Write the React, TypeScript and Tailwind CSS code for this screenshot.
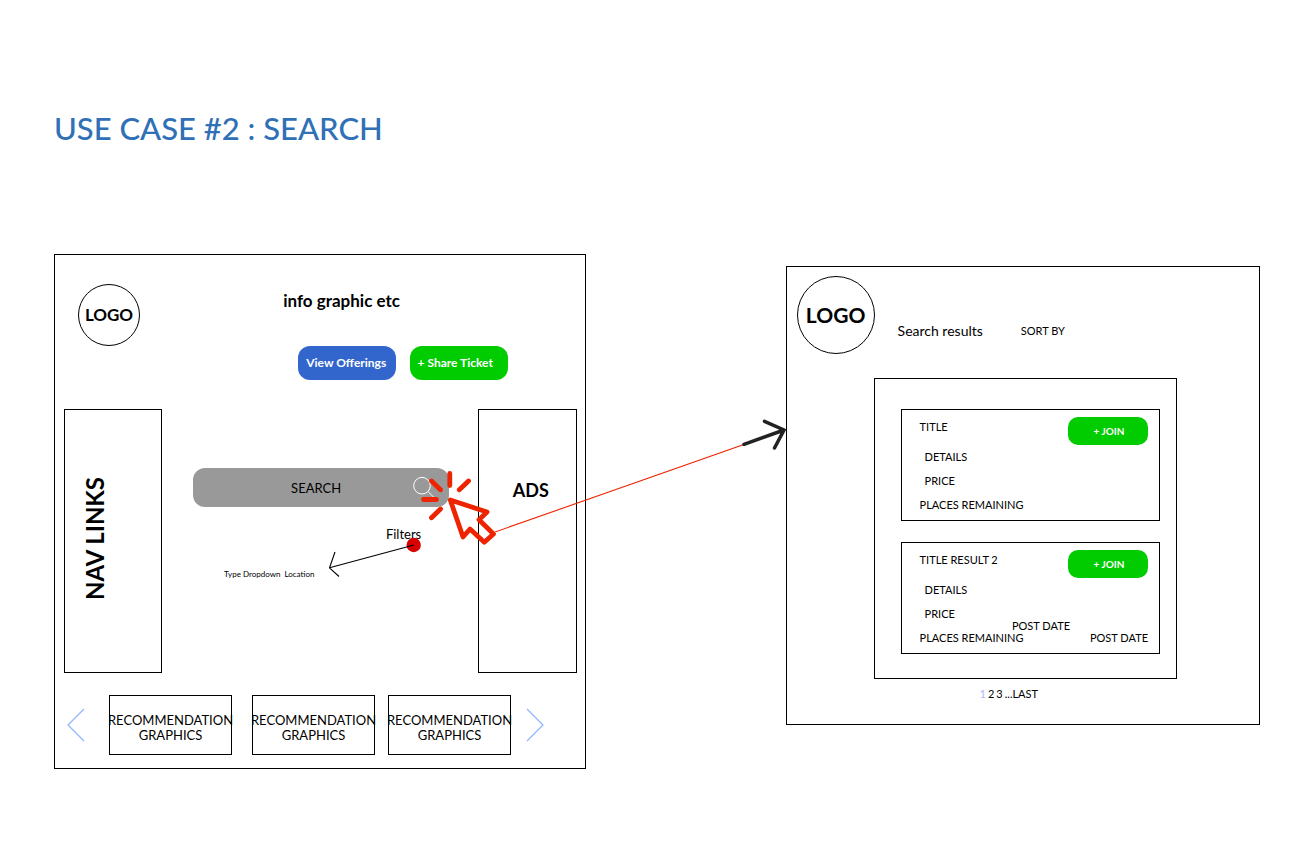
import type { ReactNode } from "react";

function Logo({ className }: { className: string }) {
  return (
    <div className={`flex shrink-0 items-center justify-center rounded-full border border-black font-bold ${className}`}>
      LOGO
    </div>
  );
}

function Chevron({ label, points }: { label: string; points: string }) {
  return (
    <button type="button" aria-label={label} className="shrink-0">
      <svg width="18" height="34" viewBox="0 0 18 34" fill="none" stroke="#8fb4ff" strokeWidth="1.2">
        <polyline points={points} />
      </svg>
    </button>
  );
}

function ClickCursor() {
  return (
    <svg
      className="pointer-events-none absolute -right-[49px] top-0 z-10"
      width="78"
      height="80"
      viewBox="420 467 78 80"
      fill="none"
      stroke="#ee2400"
      strokeWidth="4.8"
      strokeLinecap="round"
      strokeLinejoin="round"
      aria-hidden="true"
    >
      <path d="M449.800 472.500V484.500M431.500 480L440.500 488.800M468.500 480L459.300 488.800M423.500 498.500H436.500M440.500 508L431.500 516.800" />
      <path d="M450.300 499L487 511L479 518.700L493.500 533L484.300 541.300L470 528L463 536Z" />
    </svg>
  );
}

function FilterArrow() {
  return (
    <svg
      className="pointer-events-none absolute right-[56px] top-[128px]"
      width="94"
      height="42"
      viewBox="328 537 94 42"
      fill="none"
      stroke="#000"
      strokeWidth="1.1"
      aria-hidden="true"
    >
      <circle cx="413.700" cy="545" r="7.200" fill="#d90000" stroke="none" />
      <path d="M414 545L329.500 567.800M335 552L329.500 567.800L339 576.500" />
    </svg>
  );
}

const recommendations = [
  { id: "first", spacing: "ml-6 mr-5" },
  { id: "second", spacing: "mr-[13px]" },
  { id: "third", spacing: "" },
];

function HomeBoard() {
  return (
    <section className="flex min-w-0 flex-[532] flex-col border border-black pb-[13px]">
      <header className="flex pl-[23px] pr-[77px] pt-[29px]">
        <Logo className="size-[62px] text-[17px]" />
        <div className="ml-auto flex w-[225px] flex-col pt-[5px]">
          <h2 className="text-[17px] font-bold leading-6">info graphic etc</h2>
          <div className="mt-[33px] flex justify-end gap-[14px]">
            <button type="button" className="h-[34px] w-[98px] whitespace-nowrap rounded-xl bg-[#3366cc] pr-[2px] text-[12px] font-bold text-white">
              View Offerings
            </button>
            <button type="button" className="h-[34px] w-[98px] whitespace-nowrap rounded-xl bg-[#00cc00] pr-2 text-[12px] font-bold text-white">
              + Share Ticket
            </button>
          </div>
        </div>
      </header>

      <div className="mt-[29px] flex min-h-[264px] pl-[9px] pr-2">
        <nav className="flex w-[98px] shrink-0 items-center justify-center border border-black pb-1 pr-9">
          <span className="rotate-180 text-[24px] font-bold leading-8 [writing-mode:vertical-rl]">NAV LINKS</span>
        </nav>
        <div className="relative min-w-0 flex-1 pt-[59px]">
          <div className="relative ml-[31px] mr-[29px]">
            <input
              type="text"
              aria-label="Search"
              placeholder="SEARCH"
              className="h-[39px] w-full rounded-xl bg-[#999999] pr-[10px] text-center text-[13px] text-black placeholder:text-black"
            />
            <svg
              className="absolute right-[14px] top-[8px]"
              width="22"
              height="24"
              viewBox="412 476 22 24"
              fill="none"
              stroke="#fff"
              strokeWidth="1"
              aria-hidden="true"
            >
              <circle cx="421" cy="485.700" r="8.300" />
              <path d="M427 491.500L432.500 497" />
            </svg>
            <ClickCursor />
          </div>
          <p className="mt-[19px] pr-[57px] text-right text-[13px] leading-4">Filters</p>
          <div className="mt-[26px] flex gap-1 pl-[62px] text-[8px] leading-3">
            <button type="button">Type Dropdown</button>
            <button type="button">Location</button>
          </div>
          <FilterArrow />
        </div>
        <aside className="flex w-[99px] shrink-0 justify-center border border-black pl-[6px] pt-[68px] text-[18px] font-bold leading-6">
          ADS
        </aside>
      </div>

      <footer className="mt-[22px] flex items-center pl-3 pr-[41px]">
        <Chevron label="Previous recommendations" points="17,1 1,17 17,33" />
        {recommendations.map(({ id, spacing }) => (
          <div
            key={id}
            className={`flex h-[60px] w-[123px] items-center justify-center border border-black pt-[6px] text-center text-[13px] leading-[15px] ${spacing}`}
          >
            <span>
              RECOMMENDATION
              <br />
              GRAPHICS
            </span>
          </div>
        ))}
        <div className="ml-auto flex">
          <Chevron label="Next recommendations" points="1,1 17,17 1,33" />
        </div>
      </footer>
    </section>
  );
}

function Connector() {
  return (
    <div className="relative min-w-0 flex-[200]" aria-hidden="true">
      <svg
        className="absolute -left-[91px] top-[190px] h-[88px] w-[calc(100%+51px)]"
        viewBox="0 0 251 88"
        preserveAspectRatio="none"
        fill="none"
        stroke="#ee2400"
        strokeWidth="1.1"
      >
        <line x1="0" y1="88" x2="251" y2="0" />
      </svg>
      <svg
        className="absolute right-0 top-[164px]"
        width="44"
        height="32"
        viewBox="743 418 44 32"
        fill="none"
        stroke="#222"
        strokeWidth="3.500"
        strokeLinecap="round"
      >
        <path d="M745 444.300L785 430M765.500 421.300L785 430L775.500 448" />
      </svg>
    </div>
  );
}

function ResultCard({ title, children, extra }: { title: string; children?: ReactNode; extra?: ReactNode }) {
  return (
    <li className="relative border border-black pb-[7px] pl-[18px] pr-[11px] pt-[7px] text-[11px] leading-4">
      <div className="flex items-start justify-between">
        <h3 className="pt-[2px]">{title}</h3>
        <button type="button" className="h-7 w-20 rounded-[10px] bg-[#00cc00] pl-[2px] text-[10px] font-bold text-white">
          + JOIN
        </button>
      </div>
      <div className="mt-1 flex flex-col gap-2">
        <p className="pl-[5px]">DETAILS</p>
        <p className="pl-[5px]">PRICE</p>
        <div className="flex justify-between">
          <p>PLACES REMAINING</p>
          {children}
        </div>
      </div>
      {extra}
    </li>
  );
}

function ResultsBoard() {
  return (
    <section className="mt-3 flex min-w-0 flex-[474] flex-col self-start border border-black pb-[22px]">
      <header className="flex items-start pl-[10px] pt-[9px]">
        <Logo className="size-[78px] text-[21px]" />
        <h2 className="ml-[23px] mt-[45px] text-[14px] leading-5">Search results</h2>
        <button type="button" className="ml-[38px] mt-[45px] text-[11px] leading-5">
          SORT BY
        </button>
      </header>
      <ul className="ml-[87px] mr-[82px] mt-6 flex flex-col gap-[21px] border border-black pb-6 pl-[26px] pr-4 pt-[30px]">
        <ResultCard title="TITLE" />
        <ResultCard
          title="TITLE RESULT 2"
          extra={<p className="absolute bottom-[19px] right-[89px]">POST DATE</p>}
        >
          <p>POST DATE</p>
        </ResultCard>
      </ul>
      <nav aria-label="Pages" className="mt-[7px] flex justify-center gap-[2px] pr-7 text-[11px] leading-4">
        <a href="#1" className="text-[#a9b8ff]">1</a>
        <a href="#2">2</a>
        <a href="#3">3</a>
        <a href="#last">...LAST</a>
      </nav>
    </section>
  );
}

export default function App() {
  return (
    <main className="min-h-screen bg-white pb-[87px] pl-[54px] pr-[39px] pt-[108px] font-['Lato',sans-serif] text-black">
      <h1 className="text-[31px] font-medium leading-10 text-[#2f70b7]">USE CASE #2 : SEARCH</h1>
      <div className="mt-[106px] flex">
        <HomeBoard />
        <Connector />
        <ResultsBoard />
      </div>
    </main>
  );
}
